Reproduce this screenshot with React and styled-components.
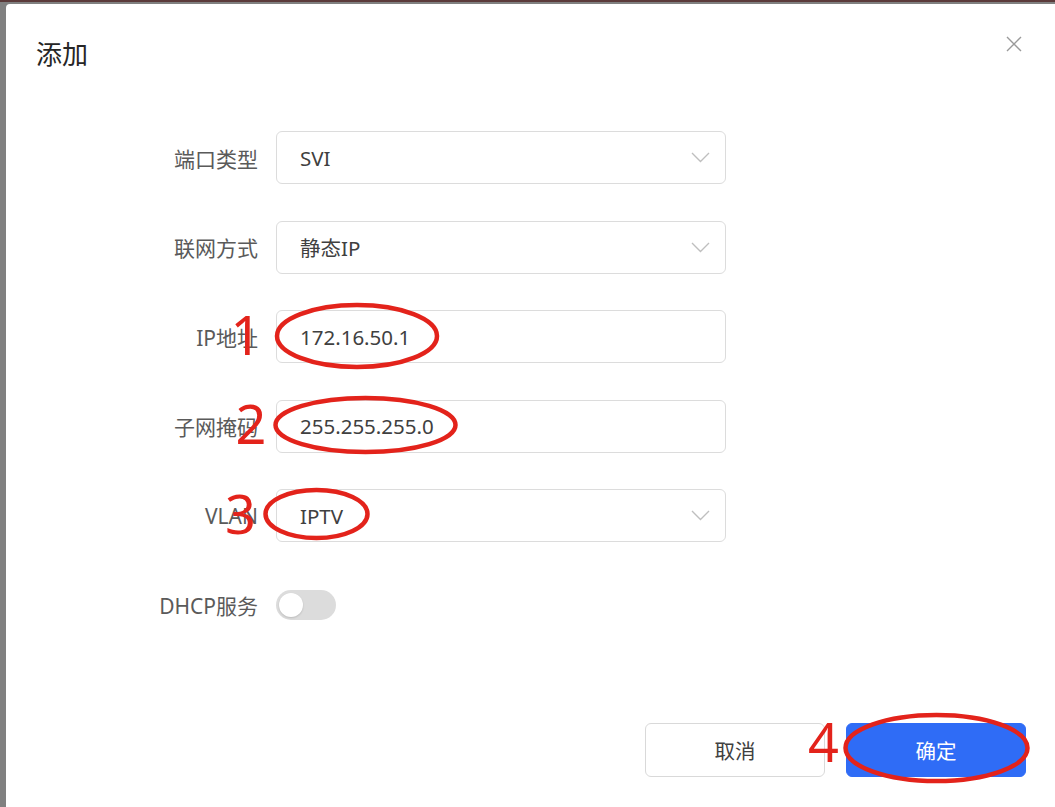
import React from 'react';
import styled, { createGlobalStyle } from 'styled-components';

const GlobalStyle = createGlobalStyle`
    html, body {
        margin: 0;
        padding: 0;
        overflow: hidden;
        background-color: #808080;
    }
    * {
        box-sizing: border-box;
    }
`;

const FONT = `"Noto Sans", "Noto Sans CJK SC", sans-serif`;

const Page = styled.div`
    position: relative;
    width: 1055px;
    height: 807px;
    overflow: hidden;
    background-color: #808080;
    font-family: ${FONT};
`;

const TopStrip = styled.div`
    height: 2px;
    background-color: #5b3a3a;
`;

const Modal = styled.div`
    display: flex;
    flex-direction: column;
    margin: 2px 0 0 6px;
    height: 803px;
    background-color: #fff;
    border-top-left-radius: 4px;
`;

const Header = styled.div`
    display: flex;
    align-items: center;
    justify-content: space-between;
    padding: 34px 33px 0 30px;
`;

const Title = styled.div`
    font-size: 26px;
    line-height: 32px;
    color: #262626;
`;

const CloseButton = styled.div`
    display: flex;
    width: 16px;
    height: 16px;
    margin-top: -20px;
    color: #9a9a9a;
`;

const Form = styled.div`
    display: grid;
    grid-template-columns: 252px 450px;
    grid-auto-rows: 53px;
    column-gap: 18px;
    row-gap: 36.5px;
    margin-top: 61px;
    align-items: center;
`;

const Label = styled.div`
    text-align: right;
    font-size: 21px;
    color: #5a5a5a;
`;

const Field = styled.div`
    display: flex;
    align-items: center;
    justify-content: space-between;
    height: 53px;
    padding: 0 15px 0 23px;
    border: 1px solid #dcdcdc;
    border-radius: 6px;
    font-size: 20.5px;
    color: #404040;
`;

const Chevron = styled.svg`
    width: 19px;
    height: 11px;
    color: #bfbfbf;
`;

const Toggle = styled.div`
    display: flex;
    align-items: center;
    width: 60px;
    height: 30px;
    padding: 0 3px;
    border-radius: 15px;
    background-color: ${(p) => (p.on ? '#2f6cf6' : '#dcdcdc')};
    justify-content: ${(p) => (p.on ? 'flex-end' : 'flex-start')};
`;

const Knob = styled.div`
    width: 24px;
    height: 24px;
    border-radius: 50%;
    background-color: #fff;
    box-shadow: 0 1px 2px rgba(0, 0, 0, 0.15);
`;

const Footer = styled.div`
    display: flex;
    justify-content: flex-end;
    gap: 21px;
    margin-top: 91.5px;
    padding-right: 29px;
`;

const Button = styled.div`
    display: flex;
    align-items: center;
    justify-content: center;
    width: 180px;
    height: 54px;
    border-radius: 6px;
    font-size: 20.5px;
    border: 1px solid ${(p) => (p.primary ? '#2f6cf6' : '#d9d9d9')};
    background-color: ${(p) => (p.primary ? '#2f6cf6' : '#fff')};
    color: ${(p) => (p.primary ? '#fff' : '#404040')};
`;

// red marks drawn on top of the screenshot
const Overlay = styled.svg`
    position: absolute;
    left: 0;
    top: 0;
    pointer-events: none;
`;

const Mark = styled.span`
    position: absolute;
    width: 40px;
    text-align: center;
    font-size: 54px;
    line-height: 1;
    color: #e3231b;
`;

const fields = [
    { label: '端口类型', value: 'SVI', select: true },
    { label: '联网方式', value: '静态IP', select: true },
    { label: 'IP地址', value: '172.16.50.1' },
    { label: '子网掩码', value: '255.255.255.0' },
    { label: 'VLAN', value: 'IPTV', select: true },
];

const rings = [
    { cx: 357, cy: 336, rx: 80, ry: 31 },
    { cx: 365.5, cy: 425, rx: 90, ry: 27 },
    { cx: 316.5, cy: 514, rx: 51, ry: 24 },
    { cx: 936.5, cy: 748, rx: 91, ry: 33 },
];

const marks = [
    { n: '1', x: 246, y: 316 },
    { n: '2', x: 251, y: 405 },
    { n: '3', x: 240.5, y: 495 },
    { n: '4', x: 823.5, y: 723 },
];

const App = () => {
    return (
        <Page>
            <GlobalStyle />
            <TopStrip />
            <Modal>
                <Header>
                    <Title>添加</Title>
                    <CloseButton>
                        <svg width="16" height="16" viewBox="0 0 16 16" fill="none" stroke="currentColor" strokeWidth="1.4">
                            <path d="M1 1 L15 15 M15 1 L1 15" />
                        </svg>
                    </CloseButton>
                </Header>

                <Form>
                    {fields.map((f) => (
                        <React.Fragment key={f.label}>
                            <Label>{f.label}</Label>
                            <Field>
                                <span>{f.value}</span>
                                {f.select ? (
                                    <Chevron viewBox="0 0 19 11" fill="none" stroke="currentColor" strokeWidth="1.4">
                                        <path d="M1 1 L9.5 9.5 L18 1" />
                                    </Chevron>
                                ) : null}
                            </Field>
                        </React.Fragment>
                    ))}
                    <Label>DHCP服务</Label>
                    <Toggle>
                        <Knob />
                    </Toggle>
                </Form>

                <Footer>
                    <Button>取消</Button>
                    <Button primary>确定</Button>
                </Footer>
            </Modal>

            <Overlay width="1055" height="807" viewBox="0 0 1055 807">
                {rings.map((r, i) => (
                    <ellipse key={i} cx={r.cx} cy={r.cy} rx={r.rx} ry={r.ry} fill="none" stroke="#e3231b" strokeWidth="4.5" />
                ))}
            </Overlay>
            {marks.map((m) => (
                <Mark key={m.n} style={{ left: m.x - 20, top: m.y - 9 }}>{m.n}</Mark>
            ))}
        </Page>
    );
};

export default App;
